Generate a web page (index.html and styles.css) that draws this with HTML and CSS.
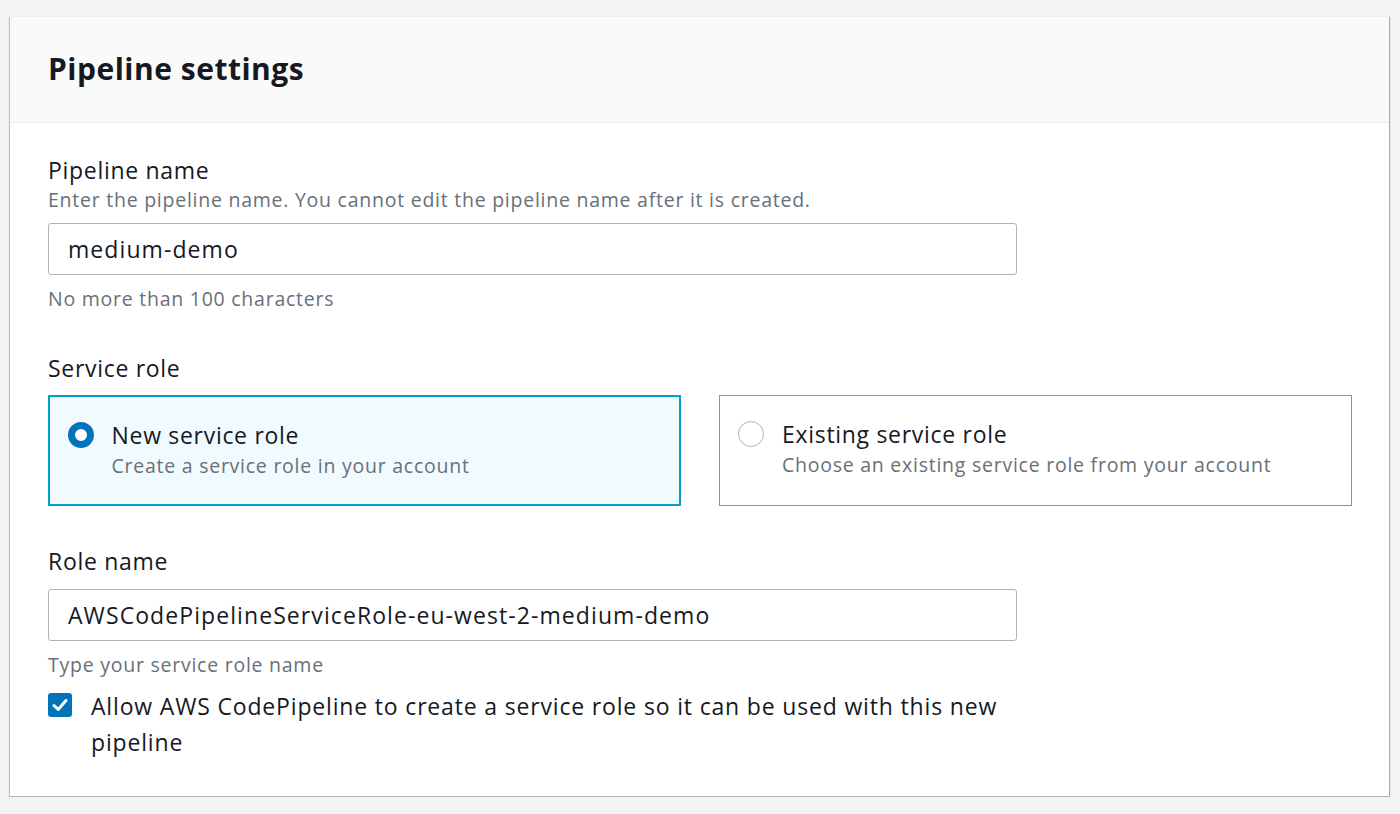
FILE: index.html
```html
<!DOCTYPE html>
<html lang="en">
<head>
<meta charset="utf-8">
<title>Pipeline settings</title>
<link rel="stylesheet" href="styles.css">
</head>
<body>
<div class="card">
  <div class="card-header"><h2 class="title">Pipeline settings</h2></div>
  <div class="card-body">
    <div class="field">
      <div class="label">Pipeline name</div>
      <div class="desc">Enter the pipeline name. You cannot edit the pipeline name after it is created.</div>
      <div class="input">medium-demo</div>
      <div class="hint">No more than 100 characters</div>
    </div>
    <div class="field field-role">
      <div class="label">Service role</div>
      <div class="tiles">
        <div class="tile tile-on">
          <span class="radio radio-on"></span>
          <div class="tile-text">
            <div class="tile-title">New service role</div>
            <div class="tile-desc">Create a service role in your account</div>
          </div>
        </div>
        <div class="tile">
          <span class="radio"></span>
          <div class="tile-text">
            <div class="tile-title">Existing service role</div>
            <div class="tile-desc">Choose an existing service role from your account</div>
          </div>
        </div>
      </div>
    </div>
    <div class="field field-name">
      <div class="label">Role name</div>
      <div class="input input-role">AWSCodePipelineServiceRole-eu-west-2-medium-demo</div>
      <div class="hint">Type your service role name</div>
      <div class="check-row">
        <span class="checkbox"><svg width="24" height="24" viewBox="0 0 24 24"><path d="M6 12.5 L10.2 16.5 L18 7.5" fill="none" stroke="#fff" stroke-width="3" stroke-linecap="round" stroke-linejoin="round"/></svg></span>
        <span class="check-label">Allow AWS CodePipeline to create a service role so it can be used with this new pipeline</span>
      </div>
    </div>
  </div>
</div>
</body>
</html>
```

FILE: styles.css
```css
* { box-sizing: border-box; }
html, body { margin: 0; padding: 0; }
body {
  background: #f2f3f3;
  padding: 16px 11px 0 10px;
  font-family: "Open Sans", "Noto Sans", Arial, sans-serif;
  color: #16191f;
}
.card {
  width: 1379px;
  height: 781px;
  background: #fff;
  box-shadow: 0 1px 1px 0 rgba(0, 28, 36, 0.5), 1px 1px 1px 0 rgba(0, 28, 36, 0.25), -1px 1px 1px 0 rgba(0, 28, 36, 0.15);
  border-top: 1px solid #eaeded;
  border-bottom: 1px solid #aab7b8;
}
.card-header {
  height: 106px;
  background: #fafafa;
  border-bottom: 1px solid #eaeded;
  display: flex;
  align-items: center;
  padding: 0 38px 2px;
}
.title {
  margin: 0;
  font-size: 30px;
  font-weight: 700;
  line-height: 36px;
  letter-spacing: 0.5px;
}
.card-body {
  padding: 32px 37px 0 38px;
}
.label {
  font-size: 23px;
  line-height: 30px;
  letter-spacing: 0.7px;
}
.desc, .hint {
  font-size: 19.5px;
  line-height: 30px;
  letter-spacing: 0.75px;
  color: #687078;
}
.input {
  width: 969px;
  height: 52px;
  margin-top: 8px;
  border: 1px solid #aab7b8;
  border-radius: 3px;
  padding: 0 19px;
  display: flex;
  align-items: center;
  font-size: 23px;
  letter-spacing: 1.08px;
}
.field .hint { margin-top: 9px; }
.field-role { margin-top: 39px; }
.tiles {
  display: flex;
  gap: 38px;
  margin-top: 12px;
}
.tile {
  width: 633px;
  flex: none;
  height: 111px;
  border: 1.5px solid #879596;
  display: flex;
  align-items: flex-start;
  padding: 23px 18px 0 18px;
}
.tile-on {
  border: 2px solid #00a1c9;
  background: #f1faff;
  padding: 22.5px 17.5px 0 17.5px;
}
.radio {
  width: 26px;
  height: 26px;
  border-radius: 50%;
  border: 1.5px solid #aab7b8;
  background: #fff;
  flex: none;
  margin-top: 2px;
}
.radio-on {
  border: 7px solid #0073bb;
}
.tile-text { margin-left: 18px; }
.tile-title {
  font-size: 23px;
  line-height: 30px;
  letter-spacing: 0.7px;
}
.tile-desc {
  font-size: 19.5px;
  line-height: 32px;
  letter-spacing: 0.75px;
  color: #687078;
}
.field-name { margin-top: 40px; }
.input-role { margin-top: 13px; }
.check-row {
  display: flex;
  align-items: flex-start;
  width: 1000px;
  margin-top: 8px;
}
.checkbox {
  width: 24px;
  height: 24px;
  border-radius: 3px;
  background: #0073bb;
  flex: none;
  margin-top: 5px;
  display: block;
}
.checkbox svg { display: block; }
.check-label {
  margin-left: 19px;
  font-size: 23px;
  line-height: 36px;
  letter-spacing: 0.83px;
}
```
